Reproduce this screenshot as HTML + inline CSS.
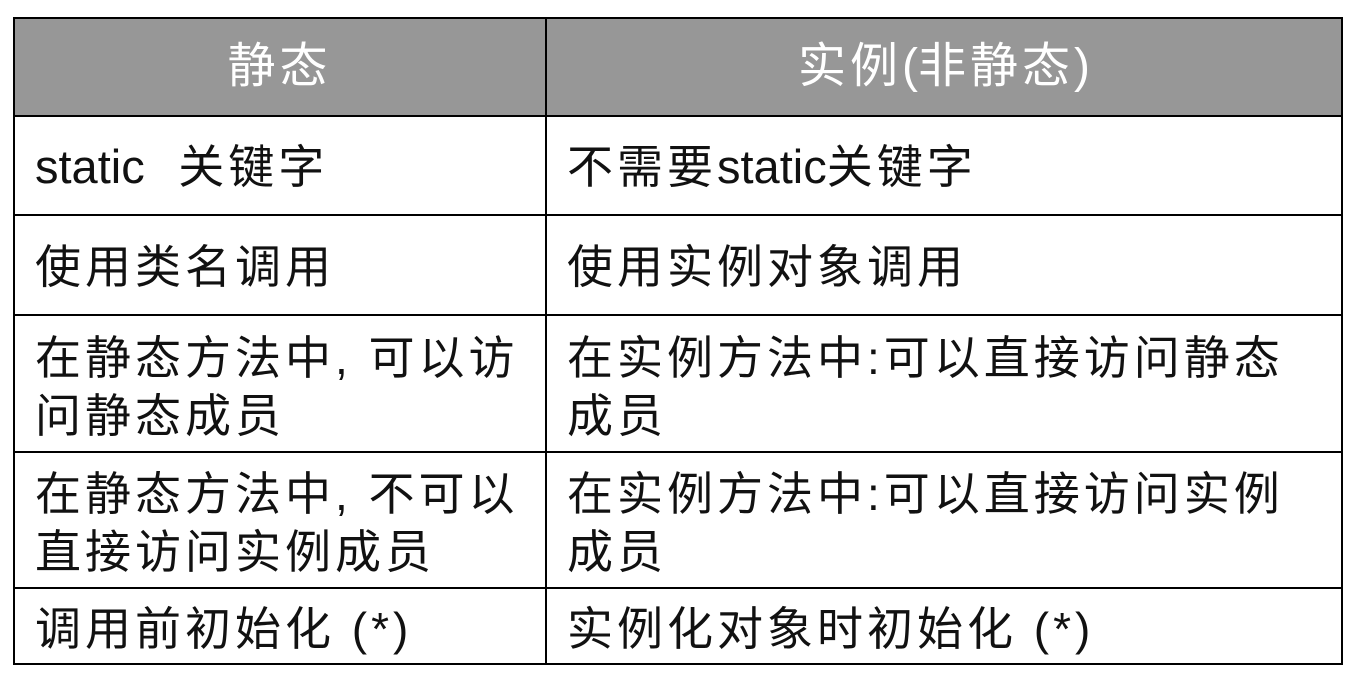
<!DOCTYPE html>
<html><head><meta charset="utf-8"><style>
html,body{margin:0;padding:0;background:#fff;width:1358px;height:676px;overflow:hidden}
body{position:relative;font-family:"Liberation Sans","Noto Sans CJK SC",sans-serif}
.h{position:absolute;background:#000;height:2px}
.v{position:absolute;background:#000;width:2px}
.t{position:absolute;font-size:46px;line-height:58px;letter-spacing:4px;color:#111;white-space:nowrap}
.l{letter-spacing:0}
.hd{position:absolute;top:18px;height:98px;background:#979797}
.w{color:#fff;text-align:center;line-height:98px;top:18px;font-size:48px}
</style></head><body>
<div class="hd" style="left:14px;width:1327px"></div>
<div class="h" style="left:13px;width:1330px;top:17px"></div>
<div class="h" style="left:13px;width:1330px;top:115px"></div>
<div class="h" style="left:13px;width:1330px;top:214px"></div>
<div class="h" style="left:13px;width:1330px;top:314px"></div>
<div class="h" style="left:13px;width:1330px;top:451px"></div>
<div class="h" style="left:13px;width:1330px;top:587px"></div>
<div class="h" style="left:13px;width:1330px;top:663px"></div>
<div class="v" style="left:13px;top:17px;height:648px"></div>
<div class="v" style="left:545px;top:17px;height:648px"></div>
<div class="v" style="left:1341px;top:17px;height:648px"></div>

<div class="t w" style="left:14px;width:531px">静态</div>
<div class="t w" style="left:547px;width:794px">实例<span class="l">(</span>非静态<span class="l">)</span></div>

<div class="t" style="left:35px;top:138px"><span class="l" style="font-size:47px">static</span>&nbsp;&nbsp;关键字</div>
<div class="t" style="left:567px;top:138px">不需要<span class="l" style="font-size:47px">static</span>关键字</div>
<div class="t" style="left:35px;top:238px">使用类名调用</div>
<div class="t" style="left:567px;top:238px">使用实例对象调用</div>
<div class="t" style="left:35px;top:329px">在静态方法中, 可以访<br>问静态成员</div>
<div class="t" style="left:567px;top:329px">在实例方法中:可以直接访问静态<br>成员</div>
<div class="t" style="left:35px;top:465px">在静态方法中, 不可以<br>直接访问实例成员</div>
<div class="t" style="left:567px;top:465px">在实例方法中:可以直接访问实例<br>成员</div>
<div class="t" style="left:35px;top:600px">调用前初始化 (*)</div>
<div class="t" style="left:567px;top:600px">实例化对象时初始化 (*)</div>
</body></html>
